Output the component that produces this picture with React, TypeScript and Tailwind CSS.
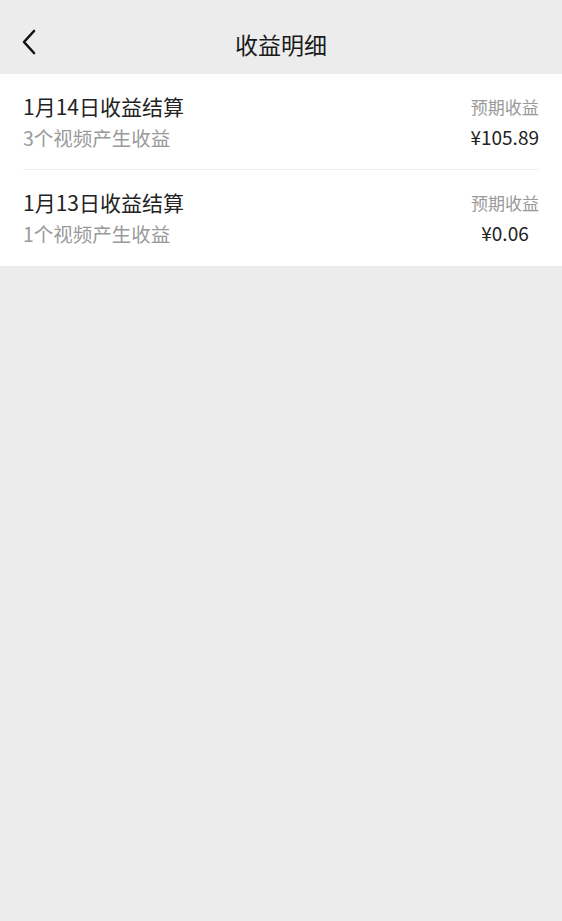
interface Item {
  title: string;
  sub: string;
  amount: string;
}

const items: Item[] = [
  { title: '1月14日收益结算', sub: '3个视频产生收益', amount: '¥105.89' },
  { title: '1月13日收益结算', sub: '1个视频产生收益', amount: '¥0.06' },
]

export default function App() {
  return (
    <div
      className="min-h-[921px] w-full bg-[#ececec]"
      style={{ fontFamily: '"Noto Sans CJK SC", "Noto Sans", sans-serif' }}
    >
      {/* header */}
      <div className="relative flex h-[74px] items-center justify-center pt-[14px]">
        <button className="absolute left-[20px] top-[29px] flex h-[26px] w-[18px] items-center justify-center text-[#111]">
          <svg width="18" height="26" viewBox="0 0 18 26" fill="none">
            <path d="M14 2 L4 13 L14 24" stroke="currentColor" strokeWidth="2.6" strokeLinecap="round" strokeLinejoin="round" />
          </svg>
        </button>
        <h1 className="text-[23px] font-normal text-[#1a1a1a]">收益明细</h1>
      </div>

      {/* list */}
      <div className="bg-white px-[23px]">
        {items.map((item, i) => (
          <div
            key={i}
            className={`flex h-[96px] items-center justify-between ${i < items.length - 1 ? 'border-b border-[#eeeeee]' : ''}`}
          >
            <div className="flex flex-col">
              <span className="text-[21px] leading-[32px] text-[#222]">{item.title}</span>
              <span className="text-[19.5px] leading-[32px] text-[#9a9a9a]">{item.sub}</span>
            </div>
            <div className="flex flex-col items-center">
              <span className="text-[17px] leading-[30px] text-[#999]">预期收益</span>
              <span className="text-[19px] leading-[30px] text-[#222]">{item.amount}</span>
            </div>
          </div>
        ))}
      </div>
    </div>
  )
}
